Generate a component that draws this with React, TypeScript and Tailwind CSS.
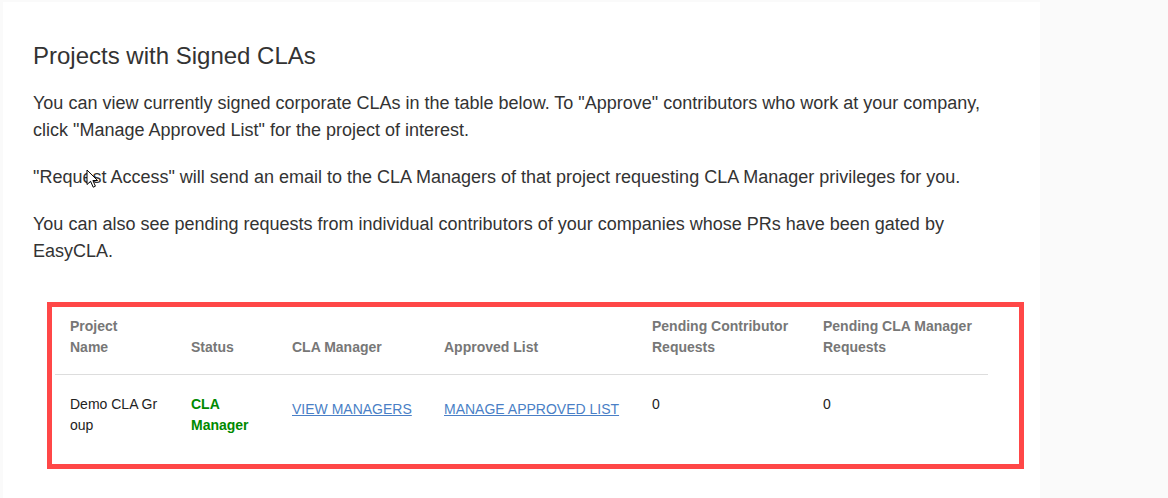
const rows = [
  {
    name: 'Demo CLA Group',
    status: 'CLA Manager',
    pendingContributors: 0,
    pendingManagers: 0,
  },
];

const Cursor = () => (
  <svg
    className="absolute left-[83px] top-[167px]"
    width="13"
    height="20"
    viewBox="0 0 13 20"
  >
    <path
      d="M1 1 L1 15.5 L4.6 12.3 L7.2 18.2 L9.4 17.2 L6.9 11.5 L11.6 11.5 Z"
      fill="#fff"
      stroke="#000"
      strokeWidth="1"
      strokeLinejoin="round"
    />
  </svg>
);

const App = () => {
  return (
    <div className="min-h-[498px] w-full bg-[#fafafa] pt-[2px] pl-[3px] font-['Liberation_Sans',Arial,sans-serif]">
      <div className="relative min-h-[496px] w-[1037px] bg-white px-[30px] pt-[41px] pb-[30px]">
        <h2 className="mb-[21px] text-[24px] leading-[26px] font-normal text-[#333]">
          Projects with Signed CLAs
        </h2>
        <p className="mb-[20px] text-[18px] leading-[27px] text-[#333]">
          You can view currently signed corporate CLAs in the table below. To "Approve" contributors who work at your
          company, click "Manage Approved List" for the project of interest.
        </p>
        <p className="mb-[20px] text-[18px] leading-[27px] text-[#333]">
          "Request Access" will send an email to the CLA Managers of that project requesting CLA Manager privileges for
          you.
        </p>
        <p className="w-[930px] text-[18px] leading-[27px] text-[#333]">
          You can also see pending requests from individual contributors of your companies whose PRs have been gated by
          EasyCLA.
        </p>

        {/* Signed projects table */}
        <div className="mt-[37px] ml-[14px] w-[977px] border-[5px] border-[#ff4747] pl-[3px]">
          <table className="w-[933px] table-fixed border-collapse text-[14px] leading-[21px]">
            <colgroup>
              <col className="w-[121px]" />
              <col className="w-[101px]" />
              <col className="w-[152px]" />
              <col className="w-[208px]" />
              <col className="w-[171px]" />
              <col className="w-[180px]" />
            </colgroup>
            <thead>
              <tr className="border-b border-[#dddddd] align-bottom text-left font-bold text-[#777]">
                <th className="px-[15px] pt-[9px] pb-[16px]">
                  <div className="max-w-[80px]">Project Name</div>
                </th>
                <th className="px-[15px] pt-[9px] pb-[16px]">Status</th>
                <th className="px-[15px] pt-[9px] pb-[16px]">CLA Manager</th>
                <th className="px-[15px] pt-[9px] pb-[16px]">Approved List</th>
                <th className="px-[15px] pt-[9px] pb-[16px]">Pending Contributor Requests</th>
                <th className="px-[15px] pt-[9px] pb-[16px]">Pending CLA Manager Requests</th>
              </tr>
            </thead>
            <tbody>
              {rows.map(row => (
                <tr key={row.name} className="align-top text-[#222]">
                  <td className="px-[15px] pt-[19px] pb-[28px] break-all">{row.name}</td>
                  <td className="px-[15px] pt-[19px] pb-[28px] font-bold text-[#008a00]">{row.status}</td>
                  <td className="px-[15px] pt-[24px] pb-[28px]">
                    <a href="#" className="text-[#4a7fc6] underline">
                      VIEW MANAGERS
                    </a>
                  </td>
                  <td className="px-[15px] pt-[24px] pb-[28px]">
                    <a href="#" className="text-[#4a7fc6] underline">
                      MANAGE APPROVED LIST
                    </a>
                  </td>
                  <td className="px-[15px] pt-[19px] pb-[28px]">{row.pendingContributors}</td>
                  <td className="px-[15px] pt-[19px] pb-[28px]">{row.pendingManagers}</td>
                </tr>
              ))}
            </tbody>
          </table>
        </div>

        <Cursor />
      </div>
    </div>
  );
};

export default App;
